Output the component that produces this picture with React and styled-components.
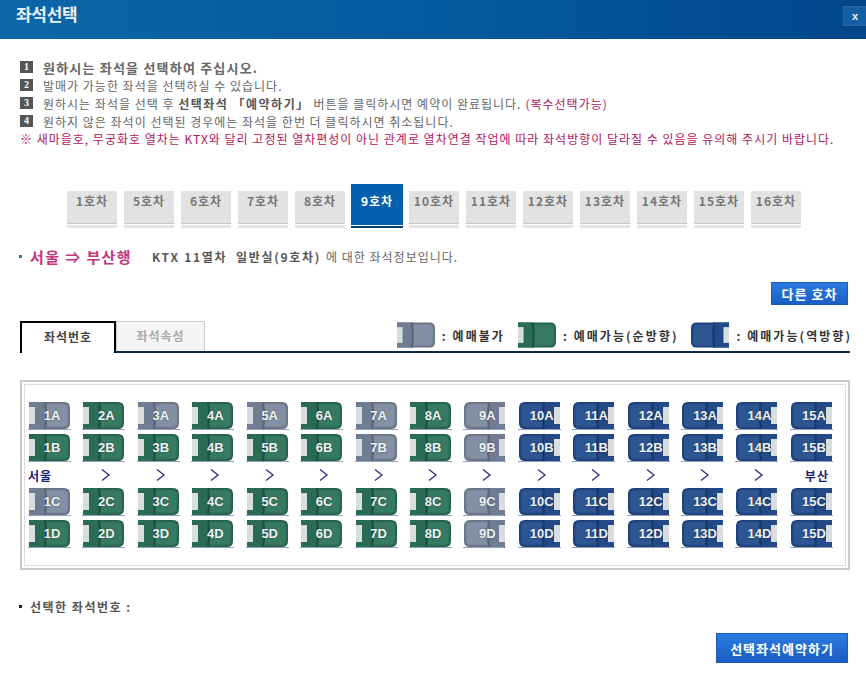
import React from 'react';
import styled, { createGlobalStyle } from 'styled-components';

const Global = createGlobalStyle`
  html, body { margin: 0; padding: 0; background: #fff; }
  body { font-family: "Noto Sans CJK KR", "Liberation Sans", sans-serif; color: #555; overflow: hidden; }
`;
const Page = styled.div`width: 866px; height: 688px; position: relative; overflow: hidden; background: #fff;`;
const Header = styled.header`
  height: 39px; background: linear-gradient(90deg, #0c66a8 0%, #045a9e 50%, #03468a 100%);
  display: flex; justify-content: space-between; padding-left: 16px; box-sizing: border-box;
`;
const Title = styled.h1`margin: 0; font-size: 17px; line-height: 28px; font-weight: 700; color: #e8f0f8; letter-spacing: -0.3px;`;
const Close = styled.button`
  box-sizing: border-box; margin-top: 6px; width: 23px; height: 20px; border: 1px solid #1f69a8; border-right: 0; padding: 0; background: #145fa4; color: #e8f0f8;
  font: 700 11px/18px "Liberation Sans", sans-serif;
`;
const Guide = styled.ul`list-style: none; margin: 19px 0 0; padding: 0 0 0 20px; display: flex; flex-direction: column;`;
const Line = styled.li`
  height: 18px; display: flex; align-items: center; gap: 10px; white-space: nowrap; color: #666;
  font-size: ${p => p.$strong ? 13 : 12}px; letter-spacing: ${p => p.$strong ? 1.2 : 1}px;
  font-weight: ${p => p.$strong ? 700 : 400};
`;
const Num = styled.span`width: 13px; height: 12px; background: #555; color: #fff; font: 700 10px/12px "Liberation Serif", serif; text-align: center; letter-spacing: 0;`;
const Warn = styled.p`margin: 0; padding-left: 20px; font-size: 12px; line-height: 18px; color: #b0145f; white-space: nowrap; letter-spacing: 1px;`;
const Pink = styled.span`color: #b0145f; margin-left: 4px;`;
const Bold = styled.b`font-weight: 700; color: #555; letter-spacing: 1.5px;`;
const Cars = styled.nav`display: flex; justify-content: flex-start; align-items: flex-end; gap: 7px; margin: 36px 0 0 67px; height: 44px;`;
const Car = styled.div`
  box-sizing: border-box; width: ${p => p.$active ? 52 : 50}px; height: ${p => p.$active ? 44 : 37}px;
  margin: ${p => p.$active ? '0 -1px 0 -1px' : '0'};
  background: ${p => p.$active
    ? 'linear-gradient(#0460ac 0 41px, #fff 41px 42px, #03407c 42px)'
    : 'linear-gradient(#e2e2e2 0 32px, #c8c8c8 32px 33px, #fff 33px 34px, #e4e4e4 34px)'};
  text-align: center; font-size: 12px; font-weight: 700; letter-spacing: 1px;
  color: ${p => p.$active ? '#fff' : '#777'}; line-height: ${p => p.$active ? 34 : 20}px;
`;
const Route = styled.div`display: flex; align-items: center; margin: 19px 0 0 19px; height: 18px; font-size: 12px; white-space: nowrap; letter-spacing: 1px; color: #666;`;
const Dot = styled.span`width: 3px; height: 3px; background: ${p => p.$c || '#38779c'}; margin-right: 8px;`;
const Dest = styled.strong`font-size: 15px; font-weight: 700; color: #c4367c; margin-right: 20px; letter-spacing: 1.4px;`;
const Train = styled.b`font-weight: 700; color: #555; letter-spacing: 1.7px; margin-right: 5px;`;
const Other = styled.div`display: flex; justify-content: flex-end; padding-right: 18px; margin-top: 17px;`;
const Btn = styled.button`
  border: 1px solid #1a5cbc; padding: 0; background: linear-gradient(#2a7ae0, #1a5ec4); color: #fff; font: 700 13px "Noto Sans CJK KR", sans-serif;
  width: ${p => p.$w}px; height: ${p => p.$h}px; letter-spacing: 1px;
`;
const TabBar = styled.div`
  margin: 16px 16px 0 20px; height: 32px; display: flex; align-items: flex-end; border-bottom: 2px solid #0b2a44; box-sizing: border-box;
`;
const Tab = styled.div`
  box-sizing: border-box; width: ${p => p.$on ? 96 : 89}px; height: ${p => p.$on ? 32 : 30}px; text-align: center; font-size: 12px; font-weight: 700; letter-spacing: 1px;
  background: ${p => p.$on ? '#fff' : '#f5f5f5'}; color: ${p => p.$on ? '#444' : '#aaa'};
  border: ${p => p.$on ? '2px solid #000' : '1px solid #ccc'}; border-bottom: 0; margin-bottom: ${p => p.$on ? -2 : 0}px; line-height: 28px;
`;
const Legend = styled.div`margin-left: auto; display: flex; align-items: center; gap: 13px; margin-bottom: 3px; margin-right: -2px;`;
const LegendItem = styled.div`display: flex; align-items: center; gap: 7px; font-size: 12px; font-weight: 700; color: #333; letter-spacing: 2.05px;`;
const Board = styled.section`
  margin: 27px 16px 0 20px; height: 190px; box-sizing: border-box; border: 2px solid #ccc; padding: 2px;
`;
const BoardInner = styled.div`
  height: 100%; box-sizing: border-box; border: 1px solid #ddd; padding: 17px 0 0 4px;
  display: flex; flex-direction: column; gap: 4px;
`;
const Row = styled.div`display: grid; grid-template-columns: repeat(15, 54.43px); height: ${p => p.$h || 28}px; align-items: ${p => p.$h ? 'center' : 'start'};`;
const Cell = styled.div`position: relative; box-sizing: border-box; width: 43px; height: 28px; padding-left: 1px; margin-left: -1px; border-bottom: 1px solid #8fa0c0;`;
const Label = styled.span`
  position: absolute; top: 0; left: 4px; width: 40px; text-align: center; font: 700 13px/27px "Liberation Sans", sans-serif; color: #eef2f4;
  text-shadow: 0 0 2px #0006;
`;
const Tag = styled.span`font-size: 12px; font-weight: 700; color: #16206e; text-align: center; width: ${p => p.$r ? 52 : 26}px; letter-spacing: 1px; margin-left: ${p => p.$r ? 0 : -2}px;`;
const Arrow = styled.svg`width: 42px; height: 12px; display: block;`;
const Selected = styled.div`display: flex; align-items: center; margin: 28px 0 0 19px; height: 16px; font-size: 12px; font-weight: 700; color: #555; letter-spacing: 1.5px;`;
const Footer = styled.div`display: flex; justify-content: flex-end; padding-right: 18px; margin-top: 19px;`;

const palette = {
  x: { back: '#6f7c92', seat: '#828fa4', seam: '#5a6576', edge: '#687384', soft: '#76828f' },
  g: { back: '#2a6b55', seat: '#377a62', seam: '#1d4f3f', edge: '#27614e', soft: '#2f6e58' },
  b: { back: '#234a86', seat: '#2c5591', seam: '#193868', edge: '#1f4076', soft: '#264a84' },
};
function SeatArt({ kind, rev, w = 41, h = 27 }) {
  const p = palette[kind];
  const outer = rev
    ? 'M6 0H41V27H6Q0 27 0 21V6Q0 0 6 0Z'
    : 'M0 0H35Q41 0 41 6V21Q41 27 35 27H0Z';
  const inner = rev
    ? 'M6 2H24V25H6Q2 25 2 21V6Q2 2 6 2Z'
    : 'M17 2H35Q39 2 39 6V21Q39 25 35 25H17Z';
  const back = rev ? 'M25 0H41V27H25Z' : 'M0 0H16V27H0Z';
  const seam = rev ? 'M25 0Q23 13 25 27' : 'M16 0Q18 13 16 27';
  return (
    <svg width={w} height={h} viewBox="0 0 41 27" style={{ display: 'block' }}>
      <path d={outer} fill={p.edge} />
      <path d={inner} fill={p.seat} stroke={p.soft} />
      <path d={back} fill={p.back} />
      <path d={seam} fill="none" stroke={p.seam} strokeWidth="2" />
      <rect x={rev ? 35 : 0} y="5" width="6" height="17" fill="#d8dde0" />
    </svg>
  );
}
function kindOf(col, lane) {
  if (col >= 10) return 'b';
  if (col === 9) return 'x';
  if (lane === 'A' && col % 2 === 1) return 'x';
  if (lane === 'B' && col === 7) return 'x';
  if (lane === 'C' && col === 1) return 'x';
  return 'g';
}
function SeatRow({ lane }) {
  return (
    <Row>
      {Array.from({ length: 15 }, (_, i) => {
        const col = i + 1;
        const rev = col >= 9;
        return (
          <Cell key={col}>
            <SeatArt kind={kindOf(col, lane)} rev={rev} />
            <Label>{col}{lane}</Label>
          </Cell>
        );
      })}
    </Row>
  );
}
const carNums = [1, 5, 6, 7, 8, 9, 10, 11, 12, 13, 14, 15, 16];

export default function App() {
  return (
    <Page>
      <Global />
      <Header>
        <Title>좌석선택</Title>
        <Close>x</Close>
      </Header>
      <Guide>
        <Line $strong><Num>1</Num>원하시는 좌석을 선택하여 주십시오.</Line>
        <Line><Num>2</Num>발매가 가능한 좌석을 선택하실 수 있습니다.</Line>
        <Line><Num>3</Num><span>원하시는 좌석을 선택 후 <Bold>선택좌석 「예약하기」</Bold> 버튼을 클릭하시면 예약이 완료됩니다.<Pink>(복수선택가능)</Pink></span></Line>
        <Line><Num>4</Num>원하지 않은 좌석이 선택된 경우에는 좌석을 한번 더 클릭하시면 취소됩니다.</Line>
      </Guide>
      <Warn>※ 새마을호, 무궁화호 열차는 KTX와 달리 고정된 열차편성이 아닌 관계로 열차연결 작업에 따라 좌석방향이 달라질 수 있음을 유의해 주시기 바랍니다.</Warn>
      <Cars>
        {carNums.map(n => <Car key={n} $active={n === 9}>{n}호차</Car>)}
      </Cars>
      <Route>
        <Dot />
        <Dest>서울 ⇒ 부산행</Dest>
        <Train>KTX 11열차 &nbsp;일반실(9호차)</Train>에 대한 좌석정보입니다.
      </Route>
      <Other><Btn $w={77} $h={23}>다른 호차</Btn></Other>
      <TabBar>
        <Tab $on>좌석번호</Tab>
        <Tab>좌석속성</Tab>
        <Legend>
          <LegendItem><SeatArt kind="x" w={38} h={26} />: 예매불가</LegendItem>
          <LegendItem><SeatArt kind="g" w={38} h={26} />: 예매가능(순방향)</LegendItem>
          <LegendItem><SeatArt kind="b" rev w={38} h={26} />: 예매가능(역방향)</LegendItem>
        </Legend>
      </TabBar>
      <Board>
        <BoardInner>
          <SeatRow lane="A" />
          <SeatRow lane="B" />
          <Row $h={18}>
            {Array.from({ length: 15 }, (_, i) => {
              if (i === 0) return <Tag key={i}>서울</Tag>;
              if (i === 14) return <Tag key={i} $r>부산</Tag>;
              return (
                <Arrow key={i} viewBox="0 0 42 12">
                  <path d="M19 0.5L26 6L19 11.5" fill="none" stroke="#2c2c80" strokeWidth="1.3" />
                </Arrow>
              );
            })}
          </Row>
          <SeatRow lane="C" />
          <SeatRow lane="D" />
        </BoardInner>
      </Board>
      <Selected><Dot $c="#222" />선택한 좌석번호 :</Selected>
      <Footer><Btn $w={132} $h={30}>선택좌석예약하기</Btn></Footer>
    </Page>
  );
}
